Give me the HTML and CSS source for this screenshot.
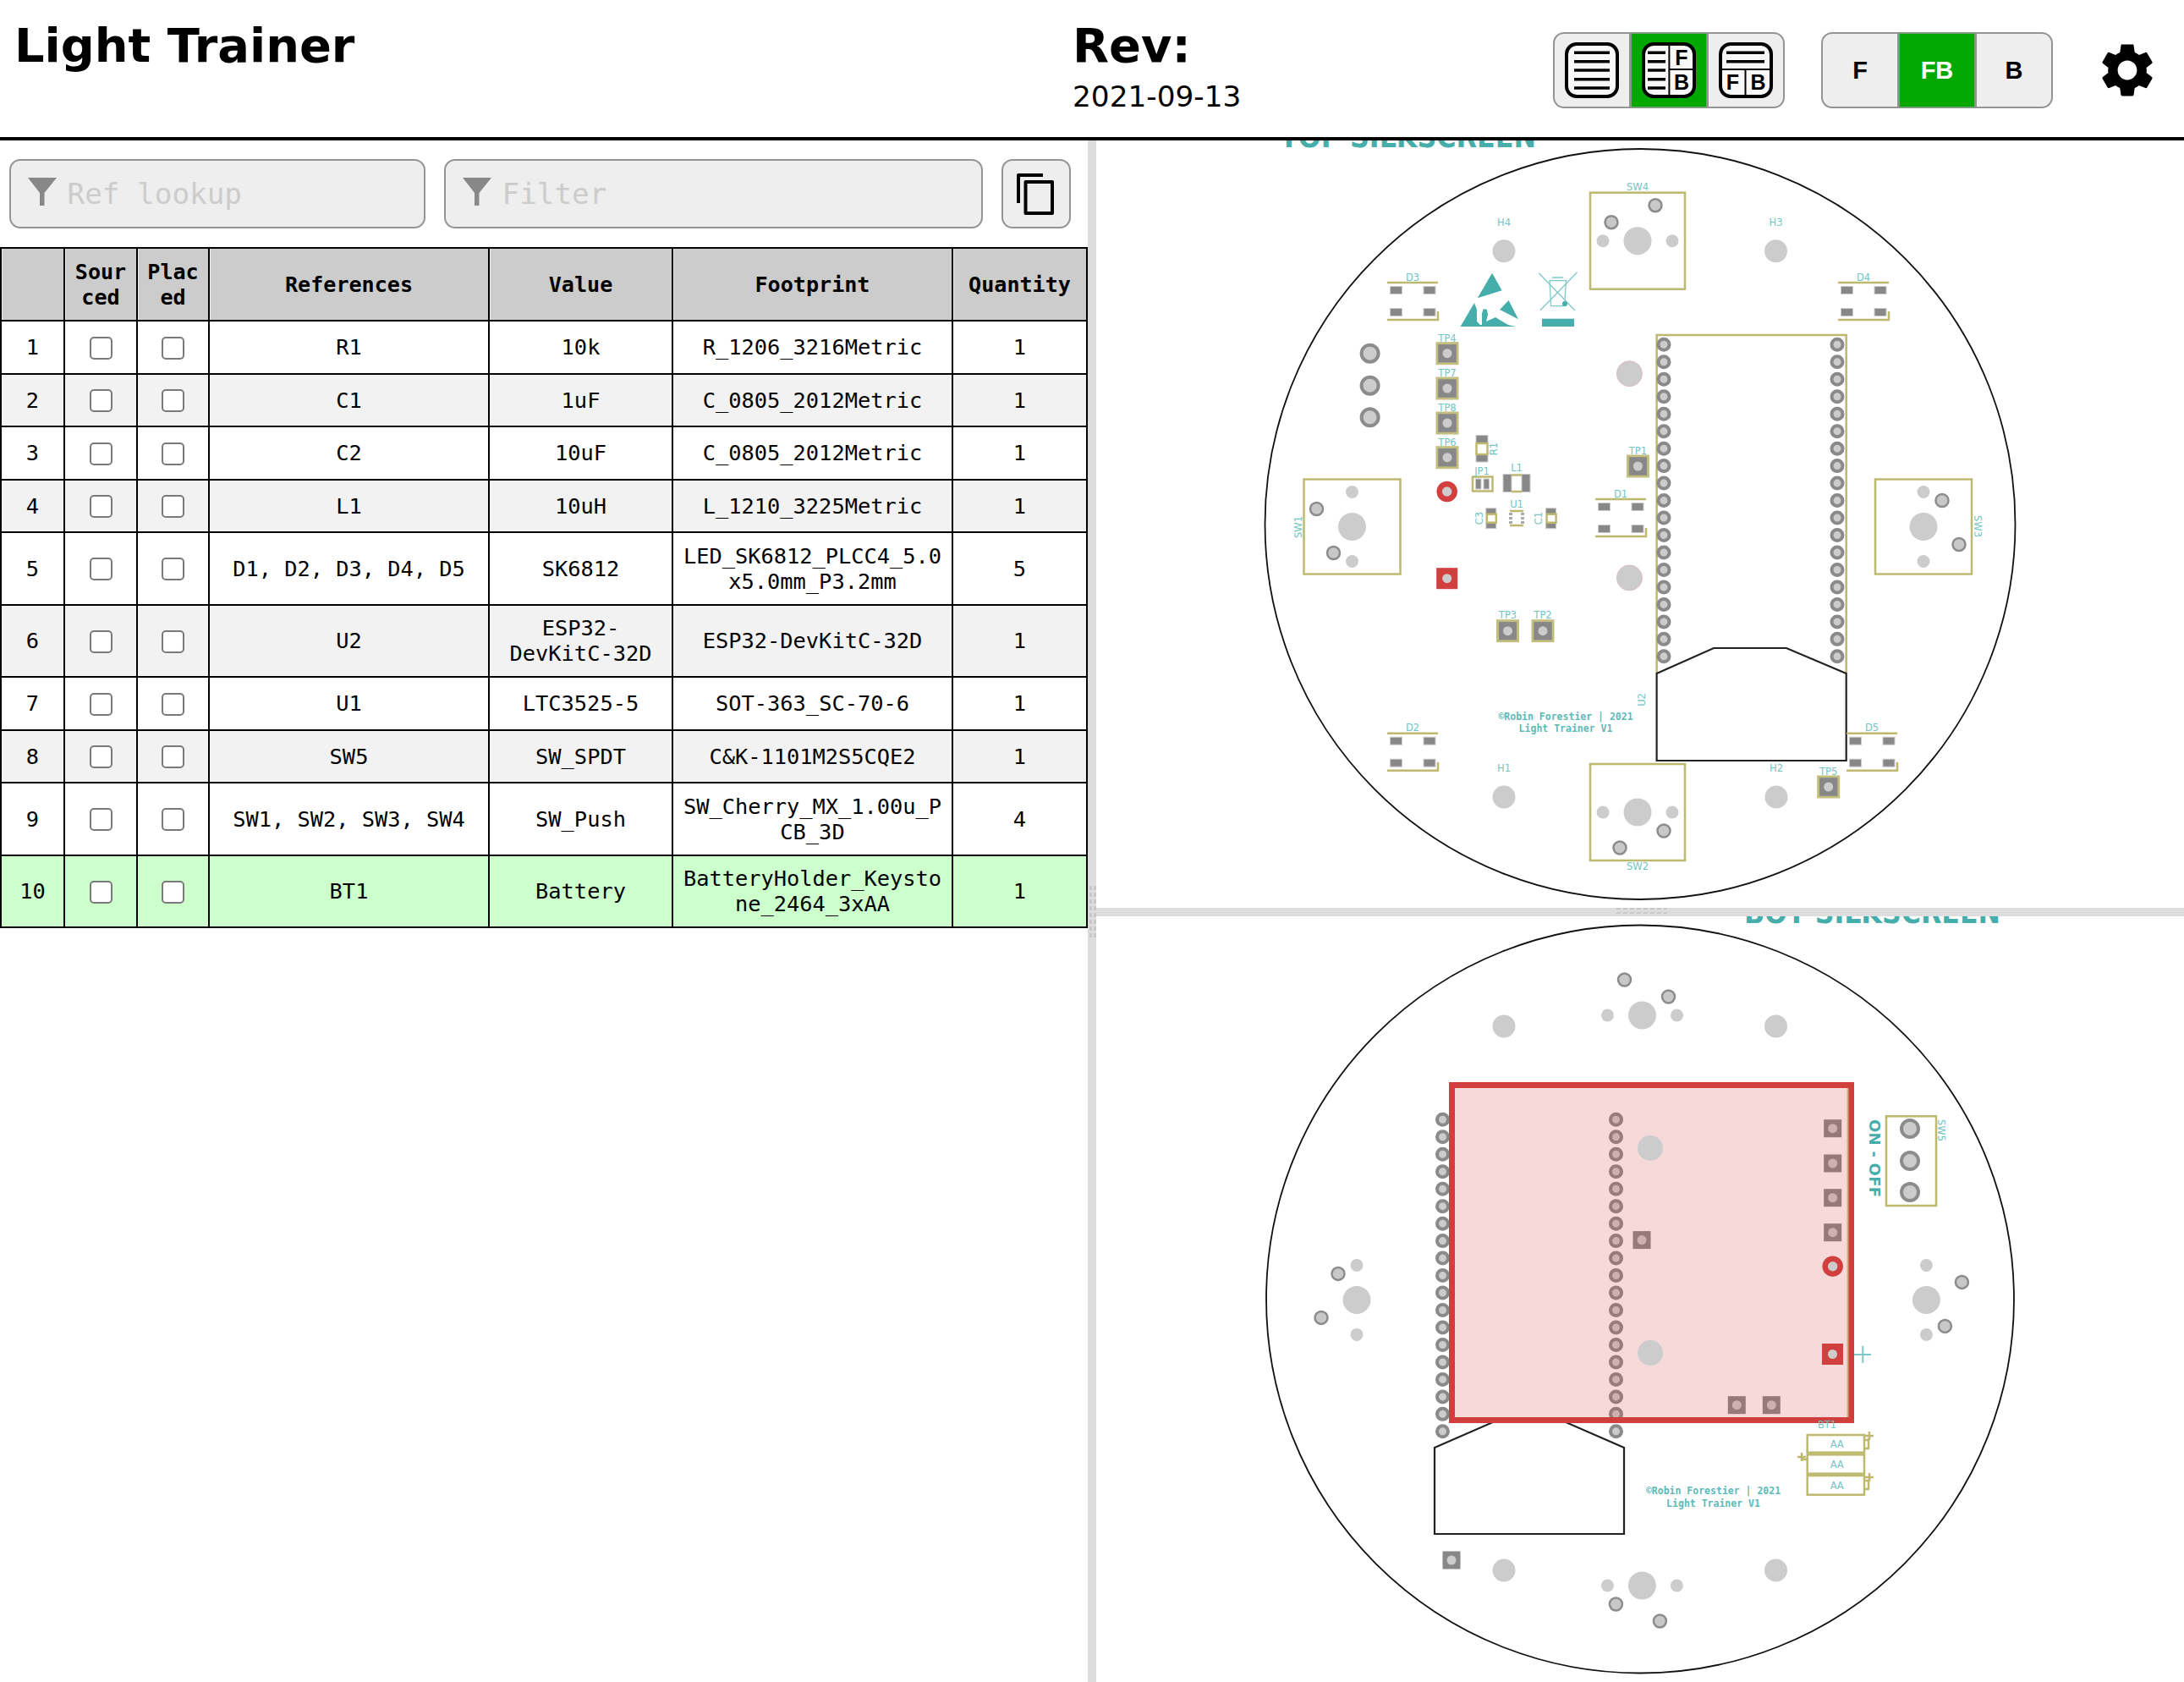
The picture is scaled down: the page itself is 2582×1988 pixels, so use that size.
FILE: index.html
```html
<!DOCTYPE html>
<html lang="en">
<head>
<meta charset="utf-8">
<title>Light Trainer</title>
<link rel="stylesheet" href="styles.css">
</head>
<body>
<header class="hdr">
  <div class="brand"><h1 class="title">Light Trainer</h1></div>
  <div class="rev"><h1 class="title">Rev:</h1><div class="date">2021-09-13</div></div>
  <div class="group">
    <div class="btn">
      <svg class="ico" viewBox="0 0 64 66"><rect class="ico-box" x="2" y="2" width="60" height="62" rx="12"/><path class="ico-line" d="M11 12.3H53M11 22.7H53M11 33H53M11 43.7H53M11 54H53"/></svg>
    </div>
    <div class="btn on">
      <svg class="ico" viewBox="0 0 64 66"><rect class="ico-box" x="2" y="2" width="60" height="62" rx="12"/><path class="ico-line" d="M7 12.3H28M7 22.7H28M7 33H28M7 43.7H28M7 54H28"/><path class="ico-div" d="M32.4 2V64M32.4 32H62"/><text class="ico-txt" x="47" y="27">F</text><text class="ico-txt" x="47" y="56">B</text></svg>
    </div>
    <div class="btn">
      <svg class="ico" viewBox="0 0 64 66"><rect class="ico-box" x="2" y="2" width="60" height="62" rx="12"/><path class="ico-line" d="M9 12.3H54M9 22.7H54"/><path class="ico-div" d="M2 32H62M31.5 32V64"/><text class="ico-txt" x="16.5" y="56">F</text><text class="ico-txt" x="46.5" y="56">B</text></svg>
    </div>
  </div>
  <div class="group">
    <div class="btn txt">F</div>
    <div class="btn txt on">FB</div>
    <div class="btn txt">B</div>
  </div>
  <svg class="gear" viewBox="0 0 24 24"><path fill-rule="evenodd" d="M19.14,12.94c0.04-0.3,0.06-0.61,0.06-0.94c0-0.32-0.02-0.64-0.07-0.94l2.03-1.58c0.18-0.14,0.23-0.41,0.12-0.61l-1.92-3.32c-0.12-0.22-0.37-0.29-0.59-0.22l-2.39,0.96c-0.5-0.38-1.03-0.7-1.62-0.94L14.4,2.81c-0.04-0.24-0.24-0.41-0.48-0.41h-3.84c-0.24,0-0.43,0.17-0.47,0.41L9.25,5.35C8.66,5.59,8.12,5.92,7.63,6.29L5.24,5.33c-0.22-0.08-0.47,0-0.59,0.22L2.74,8.87C2.62,9.08,2.66,9.34,2.86,9.48l2.03,1.58C4.84,11.36,4.8,11.69,4.8,12s0.02,0.64,0.07,0.94l-2.03,1.58c-0.18,0.14-0.23,0.41-0.12,0.61l1.92,3.32c0.12,0.22,0.37,0.29,0.59,0.22l2.39-0.96c0.5,0.38,1.03,0.7,1.62,0.94l0.36,2.54c0.05,0.24,0.24,0.41,0.48,0.41h3.84c0.24,0,0.44-0.17,0.47-0.41l0.36-2.54c0.59-0.24,1.13-0.56,1.62-0.94l2.39,0.96c0.22,0.08,0.47,0,0.59-0.22l1.92-3.32c0.12-0.22,0.07-0.47-0.12-0.61L19.14,12.94z M12,15.6c-1.98,0-3.6-1.62-3.6-3.6s1.62-3.6,3.6-3.6s3.6,1.62,3.6,3.6S13.98,15.6,12,15.6z"/></svg>
</header>
<main class="main">
  <section class="left">
    <div class="filters">
      <div class="filter ref">
        <svg class="funnel" viewBox="0 0 34 33"><path d="M0 0H34L19.5 18V33H14V18Z"/></svg>
        <input class="search" placeholder="Ref lookup">
      </div>
      <div class="filter val">
        <svg class="funnel" viewBox="0 0 34 33"><path d="M0 0H34L19.5 18V33H14V18Z"/></svg>
        <input class="search" placeholder="Filter">
      </div>
      <div class="copy">
        <svg class="copy-ico" viewBox="0 0 46 50"><path class="copy-path" d="M2 36V3H31M10.500 11H42V48H10.500Z"/></svg>
      </div>
    </div>
    <table class="bom">
      <colgroup><col class="c-n"><col class="c-s"><col class="c-p"><col class="c-r"><col class="c-v"><col class="c-f"><col class="c-q"></colgroup>
      <thead><tr class="head"><th></th><th>Sourced</th><th>Placed</th><th>References</th><th>Value</th><th>Footprint</th><th>Quantity</th></tr></thead>
      <tbody>
        <tr class="r1"><td>1</td><td><input type="checkbox" class="cb"></td><td><input type="checkbox" class="cb"></td><td>R1</td><td>10k</td><td>R_1206_3216Metric</td><td>1</td></tr>
        <tr class="r1"><td>2</td><td><input type="checkbox" class="cb"></td><td><input type="checkbox" class="cb"></td><td>C1</td><td>1uF</td><td>C_0805_2012Metric</td><td>1</td></tr>
        <tr class="r1"><td>3</td><td><input type="checkbox" class="cb"></td><td><input type="checkbox" class="cb"></td><td>C2</td><td>10uF</td><td>C_0805_2012Metric</td><td>1</td></tr>
        <tr class="r1"><td>4</td><td><input type="checkbox" class="cb"></td><td><input type="checkbox" class="cb"></td><td>L1</td><td>10uH</td><td>L_1210_3225Metric</td><td>1</td></tr>
        <tr class="r2"><td>5</td><td><input type="checkbox" class="cb"></td><td><input type="checkbox" class="cb"></td><td>D1, D2, D3, D4, D5</td><td>SK6812</td><td>LED_SK6812_PLCC4_5.0x5.0mm_P3.2mm</td><td>5</td></tr>
        <tr class="r2"><td>6</td><td><input type="checkbox" class="cb"></td><td><input type="checkbox" class="cb"></td><td>U2</td><td>ESP32-DevKitC-32D</td><td>ESP32-DevKitC-32D</td><td>1</td></tr>
        <tr class="r1"><td>7</td><td><input type="checkbox" class="cb"></td><td><input type="checkbox" class="cb"></td><td>U1</td><td>LTC3525-5</td><td>SOT-363_SC-70-6</td><td>1</td></tr>
        <tr class="r1"><td>8</td><td><input type="checkbox" class="cb"></td><td><input type="checkbox" class="cb"></td><td>SW5</td><td>SW_SPDT</td><td>C&amp;K-1101M2S5CQE2</td><td>1</td></tr>
        <tr class="r2"><td>9</td><td><input type="checkbox" class="cb"></td><td><input type="checkbox" class="cb"></td><td>SW1, SW2, SW3, SW4</td><td>SW_Push</td><td>SW_Cherry_MX_1.00u_PCB_3D</td><td>4</td></tr>
        <tr class="r2 hl"><td>10</td><td><input type="checkbox" class="cb"></td><td><input type="checkbox" class="cb"></td><td>BT1</td><td>Battery</td><td>BatteryHolder_Keystone_2464_3xAA</td><td>1</td></tr>
      </tbody>
    </table>
  </section>
  <div class="vgutter"><div class="grip-v"></div></div>
  <section class="right">
    <div class="canvas top">
      <svg class="pcb" viewBox="1296 166 1286 907">
        <defs>
          <circle id="pin" r="6.500" class="pin"/>
          <g id="col">
            <use href="#pin" y="0"/><use href="#pin" y="20.470"/><use href="#pin" y="40.950"/><use href="#pin" y="61.420"/><use href="#pin" y="81.900"/><use href="#pin" y="102.370"/><use href="#pin" y="122.850"/><use href="#pin" y="143.320"/><use href="#pin" y="163.800"/><use href="#pin" y="184.270"/><use href="#pin" y="204.750"/><use href="#pin" y="225.220"/><use href="#pin" y="245.700"/><use href="#pin" y="266.170"/><use href="#pin" y="286.650"/><use href="#pin" y="307.120"/><use href="#pin" y="327.600"/><use href="#pin" y="348.070"/><use href="#pin" y="368.550"/>
          </g>
          <g id="thole"><circle r="10" class="thole"/></g>
          <g id="sq"><rect x="-10.500" y="-10.500" width="21" height="21" class="sqpad"/><circle r="5.500" class="hole"/></g>
          <g id="tp"><rect x="-12" y="-12" width="24" height="24" class="tpbox"/><use href="#sq"/></g>
          <g id="swc">
            <circle r="16.500" class="hole"/><circle cx="-41" r="7.500" class="hole"/><circle cx="41" r="7.500" class="hole"/>
            <circle cx="-31" cy="-22" r="7.500" class="ring"/><circle cx="21" cy="-42" r="7.500" class="ring"/>
          </g>
          <g id="sw"><rect x="-56" y="-57" width="112" height="114" class="silk"/><use href="#swc"/></g>
          <g id="led">
            <path class="silk" d="M-30 -22H30M-30 22H30V12"/>
            <rect x="-26.500" y="-17.500" width="14" height="9" class="smd"/><rect x="13" y="-17.500" width="14" height="9" class="smd"/>
            <rect x="-26.500" y="8.500" width="14" height="9" class="smd"/><rect x="13" y="8.500" width="14" height="9" class="smd"/>
          </g>
          <g id="cap"><rect x="-6" y="-12" width="12" height="7" class="smd"/><rect x="-6" y="5" width="12" height="7" class="smd"/><rect x="-5" y="-5" width="11" height="10" class="silk"/></g>
        </defs>
        <text class="board-title" x="1513" y="174" textLength="303" lengthAdjust="spacingAndGlyphs">TOP SILKSCREEN</text>
        <circle class="edge" cx="1939" cy="619.500" r="443.500"/>
        <path class="silk" d="M1958.600 796V396H2182.700V796"/>
        <path class="edge-line" d="M1958.600 796L2026 766H2112L2182.700 796V899H1958.600Z"/>
        <use href="#col" x="1967" y="407.300"/><use href="#col" x="2172" y="407.300"/>
        <use href="#sw" transform="translate(1936 284.700)"/>
        <use href="#sw" transform="translate(1936 960) rotate(180)"/>
        <use href="#sw" transform="translate(1598.500 622.500) rotate(-90)"/>
        <use href="#sw" transform="translate(2274 622.500) rotate(90)"/>
        <circle class="hole" cx="1778" cy="296.700" r="13.500"/><circle class="hole" cx="2099.500" cy="296.700" r="13.500"/>
        <circle class="hole" cx="1778" cy="942" r="13.500"/><circle class="hole" cx="2100" cy="942" r="13.500"/>
        <circle class="bighole" cx="1926.400" cy="441.700" r="15"/><circle class="bighole" cx="1926.400" cy="683" r="15"/>
        <use href="#led" x="1670" y="356"/><use href="#led" x="2203" y="356"/><use href="#led" x="1916" y="612"/><use href="#led" x="1670" y="888.700"/><use href="#led" x="2213" y="888.700"/>
        <use href="#thole" x="1619.600" y="417.700"/><use href="#thole" x="1619.600" y="455.700"/><use href="#thole" x="1619.600" y="493.300"/>
        <use href="#tp" x="1711" y="417.700"/><use href="#tp" x="1711" y="459"/><use href="#tp" x="1711" y="500"/><use href="#tp" x="1711" y="540.700"/>
        <use href="#tp" x="1936.400" y="551"/><use href="#tp" x="1782.500" y="745.700"/><use href="#tp" x="1824" y="745.700"/><use href="#tp" x="2161.700" y="930"/>
        <circle class="redring" cx="1710.700" cy="581" r="9"/>
        <rect class="redpad" x="1698.200" y="671.200" width="25" height="25"/><circle class="hole" cx="1710.700" cy="683.700" r="5.500"/>
        <path class="teal" d="M1764 322.700L1775.700 343.300L1746.800 352.300Z"/>
        <path class="teal" d="M1726.500 386L1743 358L1746 366V380L1750 384H1752V370L1754 365L1758 366L1759 372L1757 380L1768 375L1783 384L1792 386Z"/>
        <path class="teal" d="M1783.600 355L1795 377.300L1773 366Z"/>
        <rect class="teal" x="1823" y="376.700" width="38" height="9.300"/>
        <path class="weee" d="M1819.300 322.700L1862 367M1864.600 321.700L1821 366.700M1832 331.700H1851.400L1849.600 361.700H1833.600ZM1835 328H1848"/>
        <circle class="teal" cx="1850" cy="359" r="3"/>
        <rect class="smd" x="1745" y="514.500" width="14" height="9"/><rect class="smd" x="1745" y="537" width="14" height="9"/><rect class="silk" x="1745.500" y="524" width="13" height="13"/>
        <rect class="silk" x="1741" y="563.500" width="23.500" height="17"/><rect class="smd" x="1744.500" y="566" width="6.500" height="12"/><rect class="smd" x="1754" y="566" width="6.500" height="12"/>
        <rect class="smd" x="1777" y="560.500" width="10" height="21"/><rect class="smd" x="1799" y="560.500" width="10" height="21"/><path class="silk" d="M1787 561.500H1799M1787 581H1799"/>
        <use href="#cap" x="1762.800" y="612.700"/><use href="#cap" x="1833.600" y="612.700"/>
        <path class="silk" d="M1785 604H1801M1785 621H1801"/><rect class="smd-s" x="1784" y="606" width="4" height="3"/><rect class="smd-s" x="1798" y="606" width="4" height="3"/><rect class="smd-s" x="1784" y="611" width="4" height="3"/><rect class="smd-s" x="1798" y="611" width="4" height="3"/><rect class="smd-s" x="1784" y="616" width="4" height="3"/><rect class="smd-s" x="1798" y="616" width="4" height="3"/>
        <text class="lbl" x="1936" y="225">SW4</text><text class="lbl" x="1936" y="1028">SW2</text>
        <text class="lbl" transform="translate(1539 623) rotate(-90)">SW1</text><text class="lbl" transform="translate(2334 622) rotate(90)">SW3</text>
        <text class="lbl" x="1778" y="267">H4</text><text class="lbl" x="2099.500" y="267">H3</text><text class="lbl" x="1778" y="912">H1</text><text class="lbl" x="2100" y="912">H2</text>
        <text class="lbl" x="1670" y="332">D3</text><text class="lbl" x="2203" y="332">D4</text><text class="lbl" x="1916" y="588">D1</text><text class="lbl" x="1670" y="864">D2</text><text class="lbl" x="2213" y="864">D5</text>
        <text class="lbl" x="1711" y="404">TP4</text><text class="lbl" x="1711" y="445">TP7</text><text class="lbl" x="1711" y="486">TP8</text><text class="lbl" x="1711" y="527">TP6</text>
        <text class="lbl" x="1936.400" y="537">TP1</text><text class="lbl" x="1782.500" y="731">TP3</text><text class="lbl" x="1824" y="731">TP2</text><text class="lbl" x="2161.700" y="916">TP5</text>
        <text class="lbl" transform="translate(1770 530.700) rotate(-90)">R1</text><text class="lbl" x="1752" y="561">JP1</text><text class="lbl" x="1793" y="557">L1</text><text class="lbl" x="1793" y="600">U1</text>
        <text class="lbl" transform="translate(1753 612.700) rotate(-90)">C3</text><text class="lbl" transform="translate(1823 612.700) rotate(-90)">C1</text><text class="lbl" transform="translate(1945 827) rotate(-90)">U2</text>
        <text class="credit" x="1851" y="851">©Robin Forestier | 2021</text><text class="credit" x="1851" y="865">Light Trainer V1</text>
      </svg>
    </div>
    <div class="hgutter"><div class="grip-h"></div></div>
    <div class="canvas bot">
      <svg class="pcb" viewBox="1296 1083 1286 905">
        <text class="board-title" x="2062" y="1091" textLength="303" lengthAdjust="spacingAndGlyphs">BOT SILKSCREEN</text>
        <circle class="edge" cx="1939" cy="1535.500" r="442"/>
        <use href="#col" x="1705.500" y="1323.300"/><use href="#col" x="1910.500" y="1323.300"/>
        <use href="#swc" transform="translate(1941.500 1200) scale(-1 1)"/>
        <use href="#swc" transform="translate(1604 1536.400) rotate(-90) scale(-1 1)"/>
        <use href="#swc" transform="translate(2277.400 1536.400) rotate(90) scale(-1 1)"/>
        <use href="#swc" transform="translate(1941.400 1874) rotate(180) scale(-1 1)"/>
        <circle class="hole" cx="1778" cy="1213" r="13.500"/><circle class="hole" cx="2099.500" cy="1213" r="13.500"/>
        <circle class="hole" cx="1778" cy="1856" r="13.500"/><circle class="hole" cx="2099.500" cy="1856" r="13.500"/>
        <use href="#sq" x="2166.700" y="1333.700"/><use href="#sq" x="2166.700" y="1375"/><use href="#sq" x="2166.700" y="1415.700"/><use href="#sq" x="2166.700" y="1456.700"/>
        <use href="#sq" x="2053.300" y="1660.700"/><use href="#sq" x="2094.300" y="1660.700"/><use href="#sq" x="1941" y="1465.600"/><use href="#sq" x="1716" y="1844"/>
        <path class="edge-line" d="M1696 1711L1767 1680H1849L1920 1711V1813H1696Z"/>
        <rect class="copper" x="1716.500" y="1282.500" width="472" height="396"/>
        <path class="silk-thin" d="M2184.500 1286V1675"/>
        <circle class="hole" cx="1951" cy="1357" r="15"/><circle class="hole" cx="1951" cy="1599" r="15"/>
        <circle class="redring" cx="2166.700" cy="1496.700" r="9"/>
        <rect class="redpad" x="2154" y="1588" width="25" height="25"/><circle class="hole" cx="2166.500" cy="1600.500" r="5.500"/>
        <rect class="silk" x="2230" y="1319.300" width="59" height="105.700"/>
        <use href="#thole" x="2258" y="1334"/><use href="#thole" x="2258" y="1372"/><use href="#thole" x="2258" y="1409"/>
        <text class="onoff" transform="translate(2210 1369) rotate(90)" textLength="92">ON - OFF</text>
        <text class="lbl" transform="translate(2291 1336) rotate(90)">SW5</text>
        <path class="plus" d="M2192 1601H2212M2202.300 1591V1611"/>
        <rect class="silk" x="2136.700" y="1696" width="67.300" height="20.700"/><rect class="silk" x="2136.700" y="1719.300" width="67.300" height="22.400"/><rect class="silk" x="2136.700" y="1744" width="67.300" height="22.700"/>
        <path class="silk" d="M2204 1702H2210M2204 1712L2209 1712V1700M2205 1697H2215M2210 1692V1702M2136 1725H2131V1722M2125 1722H2135M2130 1717V1727M2204 1750H2209V1760H2204M2205 1746H2215M2210 1741V1751"/>
        <text class="lbl" x="2160" y="1688">BT1</text>
        <text class="lbl" x="2171.700" y="1710.500">AA</text><text class="lbl" x="2171.700" y="1735">AA</text><text class="lbl" x="2171.700" y="1759.500">AA</text>
        <text class="credit" x="2025.500" y="1766">©Robin Forestier | 2021</text><text class="credit" x="2025.500" y="1781">Light Trainer V1</text>
      </svg>
    </div>
  </section>
</main>
</body>
</html>
```
FILE: styles.css
```css
html, body { margin: 0; padding: 0; background: #fff; }
body { width: 2582px; height: 1988px; overflow: hidden; font-family: "DejaVu Sans", sans-serif; color: #000; }

.hdr { display: flex; align-items: flex-start; box-sizing: border-box; height: 166px; border-bottom: 4px solid #000; }
.brand { width: 1268px; padding: 21px 0 0 17px; box-sizing: border-box; flex: none; }
.rev { width: 568px; padding-top: 21px; box-sizing: border-box; flex: none; }
.title { margin: 0; font-size: 55.900px; font-weight: bold; line-height: 65px; }
.date { margin-top: 8px; font-size: 34.3px; line-height: 40px; }

.group { display: flex; flex: none; width: 274px; height: 90px; margin: 38px 43px 0 0; }
.btn { flex: 1 1 0; display: flex; align-items: center; justify-content: center; box-sizing: border-box; background: #eee; border: 2.500px solid #949494; margin-left: -1px; }
.btn:first-child { margin-left: 0; border-radius: 13px 0 0 13px; }
.btn:last-child { border-radius: 0 13px 13px 0; }
.btn.on { background: #00a800; border-color: #7e9a7e; color: #fff; }
.txt { font-family: "Liberation Sans", sans-serif; font-weight: bold; font-size: 29px; }
.ico { width: 64px; height: 66px; }
.ico-box { fill: #f8f8f8; stroke: #000; stroke-width: 4; }
.ico-line { fill: none; stroke: #000; stroke-width: 3.500; }
.ico-div { fill: none; stroke: #000; stroke-width: 2; }
.ico-txt { font-family: "Liberation Sans", sans-serif; font-weight: bold; font-size: 25px; text-anchor: middle; fill: #000; }
.gear { flex: none; width: 76px; height: 76px; margin: 45px 0 0 7px; }

.main { display: flex; height: 1822px; }
.left { flex: none; width: 1286px; }
.filters { display: flex; gap: 22px; padding: 22px 0 22px 11px; }
.filter { position: relative; flex: none; height: 82px; }
.ref { width: 492px; }
.val { width: 637px; }
.search { display: block; width: 100%; height: 100%; box-sizing: border-box; padding: 0 0 0 66.500px; background: #eee; border: 2.500px solid #949494; border-radius: 13px; font-family: "DejaVu Sans Mono", monospace; font-size: 34.300px; outline: none; }
.search::placeholder { color: #ccc; opacity: 1; }
.funnel { position: absolute; left: 22px; top: 22px; width: 34px; height: 33px; }
.funnel path { fill: #888; }
.copy { flex: none; display: flex; align-items: center; justify-content: center; box-sizing: border-box; width: 82px; height: 82px; background: #eee; border: 2.500px solid #949494; border-radius: 13px; }
.copy-ico { width: 46px; height: 50px; }
.copy-path { fill: none; stroke: #000; stroke-width: 4; stroke-linejoin: round; }

.bom { width: 1284px; table-layout: fixed; border-collapse: collapse; font-family: "DejaVu Sans Mono", monospace; font-size: 25.350px; line-height: 29.600px; text-align: center; }
.c-n { width: 75px; } .c-s { width: 86px; } .c-p { width: 85px; } .c-r { width: 331px; }
.c-v { width: 217px; } .c-f { width: 331px; } .c-q { width: 159px; }
.bom th, .bom td { border: 2px solid #000; padding: 1.500px 10px 0; overflow-wrap: break-word; }
.bom th { background: #ccc; font-weight: bold; font-size: 25.100px; box-shadow: inset 1px 0 0 #eee; }
.head { height: 86px; }
.r1 { height: 62.500px; }
.r2 { height: 85.500px; }
.bom tbody tr:nth-child(even) { background: #f2f2f2; }
.bom tbody tr.hl { background: #cfc; }
.cb { appearance: none; display: block; box-sizing: border-box; width: 27px; height: 27px; margin: 0 auto; background: #fff; border: 2.500px solid #7a7a7a; border-radius: 5px; }

.vgutter { position: relative; flex: none; width: 10px; background: #ddd; }
.grip-v { position: absolute; left: 0; top: 878px; width: 10px; height: 66px; background: linear-gradient(to bottom, #ddd 35%, transparent 35%) 0 0 / 100% 8px, linear-gradient(to right, #ddd 45%, #c8c8c8 45%) 0 0 / 5px 100%; }
.right { flex: 1 1 0; display: flex; flex-direction: column; }
.canvas { overflow: hidden; }
.top { height: 907px; }
.bot { height: 905px; }
.hgutter { position: relative; height: 10px; background: #ddd; }
.grip-h { position: absolute; left: 612px; top: 0; width: 63px; height: 10px; background: linear-gradient(to right, #ddd 35%, transparent 35%) 0 0 / 8px 100%, linear-gradient(to bottom, #c8c8c8 45%, #ddd 45%) 0 0 / 100% 5px; }
.pcb { display: block; width: 100%; height: 100%; }

.board-title { font-family: "DejaVu Sans", sans-serif; font-weight: bold; font-size: 36px; fill: #45aeab; }
.edge { fill: #fff; stroke: #111; stroke-width: 1.800; }
.edge-line { fill: #fff; stroke: #222; stroke-width: 2.200; }
.silk { fill: none; stroke: #bdb96f; stroke-width: 2.500; }
.silk-thin { fill: none; stroke: #cfae7a; stroke-width: 2; }
.pin { fill: #ccc; stroke: #8a8a8a; stroke-width: 4; }
.ring { fill: #c8c8c8; stroke: #8c8c8c; stroke-width: 2.500; }
.hole { fill: #ccc; }
.bighole { fill: #ccc; stroke: #dcbcbc; stroke-width: 1; }
.thole { fill: #ccc; stroke: #8c8c8c; stroke-width: 4; }
.sqpad { fill: #888; }
.tpbox { fill: #888; stroke: #c2be7e; stroke-width: 3; }
.smd { fill: #888; stroke: #ccc; stroke-width: 1; }
.smd-s { fill: #aaa; }
.redring { fill: #ccc; stroke: #d23f3f; stroke-width: 6.500; }
.redpad { fill: #d23f3f; }
.teal { fill: #45aeab; }
.weee { fill: none; stroke: #7fcac7; stroke-width: 1.300; }
.plus { fill: none; stroke: #7fcac7; stroke-width: 2; }
.copper { fill: rgba(210, 63, 63, 0.2); stroke: #d03e3e; stroke-width: 7; }
.lbl { font-family: "DejaVu Sans", sans-serif; font-size: 11.500px; fill: #72c5c2; text-anchor: middle; }
.credit { font-family: "DejaVu Sans Mono", monospace; font-weight: bold; font-size: 11.500px; fill: #5dbab7; text-anchor: middle; }
.onoff { font-family: "DejaVu Sans", sans-serif; font-weight: bold; font-size: 18px; fill: #45aeab; text-anchor: middle; }
```
